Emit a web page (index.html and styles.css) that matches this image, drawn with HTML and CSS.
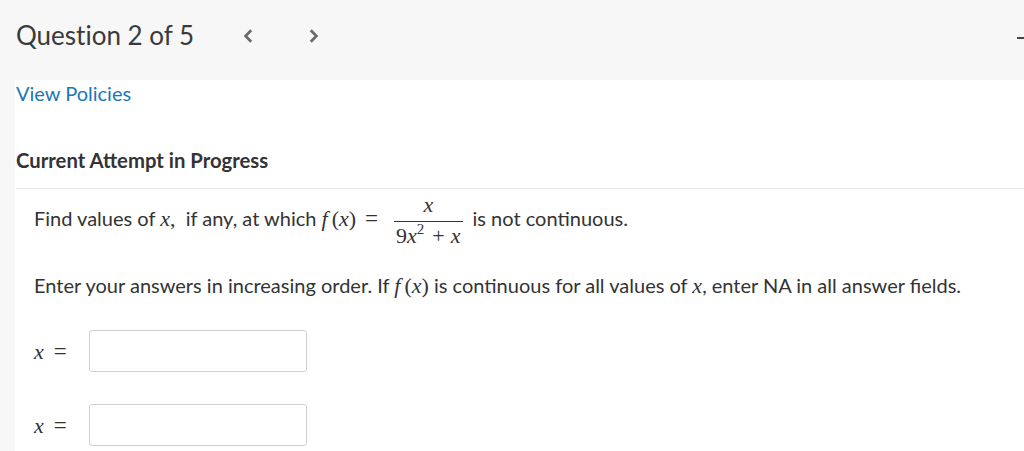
FILE: index.html
```html
<!DOCTYPE html>
<html>
<head>
<meta charset="utf-8">
<link rel="stylesheet" href="styles.css">
</head>
<body>
<header class="topbar">
  <h1 class="q-title">Question 2 of 5</h1>
  <nav class="q-nav">
    <span class="chev"><svg width="10" height="14" viewBox="0 0 10 14"><path d="M8.2 1.2 L2.6 7 L8.2 12.8" fill="none" stroke="#6b6b6b" stroke-width="2.7"/></svg></span>
    <span class="chev"><svg width="10" height="14" viewBox="0 0 10 14"><path d="M1.8 1.2 L7.4 7 L1.8 12.8" fill="none" stroke="#6b6b6b" stroke-width="2.7"/></svg></span>
  </nav>
  <span class="edge-dash"></span>
</header>
<main class="content">
  <a class="policies" href="#">View Policies</a>
  <h2 class="attempt">Current Attempt in Progress</h2>
  <section class="question">
    <p class="line1">Find values of <span class="mi">x</span><span class="mo">,</span>&nbsp; if any, at which <span class="mi">f</span><span class="mo lp">(</span><span class="mi">x</span><span class="mo">)</span><span class="mo eq">=</span><span class="frac"><span class="num"><span class="mi">x</span></span><span class="den"><span class="mn">9</span><span class="mi">x</span><sup class="sup">2</sup><span class="mo plus">+</span><span class="mi">x</span></span></span>is not continuous.</p>
    <p class="line2">Enter your answers in increasing order. If <span class="mi">f</span><span class="mo lp">(</span><span class="mi">x</span><span class="mo">)</span> is continuous for all values of <span class="mi">x</span>, enter NA in all answer fields.</p>
    <div class="answers">
      <div class="answer"><span class="lbl"><span class="mi">x</span><span class="mo eq2">=</span></span><input class="box" type="text"></div>
      <div class="answer"><span class="lbl"><span class="mi">x</span><span class="mo eq2">=</span></span><input class="box" type="text"></div>
    </div>
  </section>
</main>
</body>
</html>
```
FILE: styles.css
```css
html, body { margin: 0; padding: 0; }
body {
  background: #f7f7f7;
  font-family: Lato, "Open Sans", sans-serif;
  color: #333;
  width: 1024px;
  height: 451px;
  overflow: hidden;
}
.topbar {
  height: 80px;
  box-sizing: border-box;
  display: flex;
  align-items: flex-start;
  padding: 20px 0 0 16px;
  position: relative;
}
.q-title {
  margin: 0;
  width: 227px;
  flex: none;
  font-weight: 400;
  font-size: 26px;
  line-height: 30px;
  color: #3a3a3a;
  font-variant-ligatures: none;
}
.q-nav {
  display: flex;
  gap: 56px;
  margin-top: 9px;
}
.chev { display: block; width: 10px; height: 14px; }
.chev svg { display: block; }
.edge-dash {
  position: absolute;
  right: 0;
  top: 37px;
  width: 7px;
  height: 2px;
  background: #444;
}
.content {
  background: #fff;
  margin-left: 15px;
  height: 371px;
  padding-top: 1px;
  box-sizing: border-box;
}
.policies {
  display: block;
  margin-left: 1px;
  font-size: 20px;
  line-height: 24px;
  color: #1b78b6;
  text-decoration: none;
}
.attempt {
  margin: 43px 0 0 1px;
  font-size: 20.3px;
  font-weight: 700;
  line-height: 24px;
  color: #333;
  padding-bottom: 16px;
  border-bottom: 1px solid #e8e8e8;
}
.question {
  padding: 5px 0 0 19px;
  font-size: 20px;
  line-height: 26px;
}
.question p { margin: 0; }
.mi {
  font-family: "Liberation Serif", "DejaVu Serif", serif;
  font-style: italic;
  font-size: 22px;
}
.mo, .mn {
  font-family: "Liberation Serif", "DejaVu Serif", serif;
  font-size: 22px;
}
.lp { margin-left: 4px; }
.eq { margin: 0 12px 0 9px; font-size: 23px; }
.frac {
  display: inline-block;
  vertical-align: -17px;
  text-align: center;
  margin: 0 10px 0 4px;
}
.num {
  display: block;
  line-height: 20px;
  padding: 0 4px 6px;
  border-bottom: 1px solid #333;
}
.den {
  display: block;
  line-height: 22px;
  padding: 2px 2px 0;
}
.sup {
  font-family: "Liberation Serif", serif;
  font-size: 15px;
  vertical-align: 9px;
  line-height: 0;
}
.plus { margin: 0 6px 0 8px; }
.line2 {
  margin-top: 25px !important;
}
.answers {
  margin-top: 31px;
  display: flex;
  flex-direction: column;
  gap: 32px;
}
.answer {
  display: flex;
  align-items: center;
}
.lbl {
  width: 55px;
  line-height: 24px;
}
.eq2 { margin-left: 10px; font-size: 23px; }
.box {
  width: 218px;
  height: 42px;
  box-sizing: border-box;
  border: 1px solid #cfcfcf;
  border-radius: 3px;
  margin: 0;
  padding: 0;
  background: #fff;
}
```
